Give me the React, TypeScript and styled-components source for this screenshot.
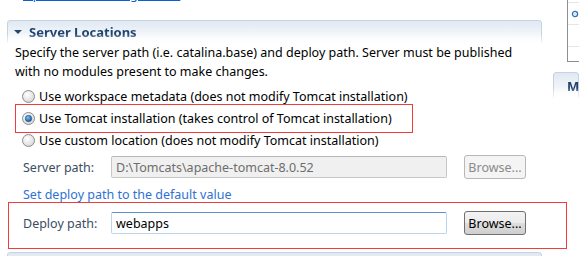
import React from "react";
import styled, { createGlobalStyle } from "styled-components";

const GlobalStyle = createGlobalStyle`
  html, body {
    margin: 0;
    padding: 0;
    background: #ffffff;
    overflow: hidden;
  }
  body {
    font-family: "Noto Sans", "Liberation Sans", sans-serif;
    font-size: 12.5px;
    color: #000;
  }
`;

const Page = styled.div`
  width: 579px;
  height: 256px;
  display: flex;
  overflow: hidden;
`;

const LeftColumn = styled.div`
  width: 535px;
  margin-left: 7px;
  display: flex;
  flex-direction: column;
`;

const RightColumn = styled.div`
  flex: 1;
  margin-left: 11px;
  display: flex;
  flex-direction: column;
  min-width: 0;
`;

const TopLink = styled.a`
  display: block;
  margin: -13px 0 0 16px;
  height: 16px;
  line-height: 16px;
  color: #0a5fd1;
  text-decoration: underline;
  white-space: nowrap;
`;

const Section = styled.section<{ $top: number }>`
  margin-top: ${(p) => p.$top}px;
  display: flex;
  flex-direction: column;
`;

const SectionHeader = styled.div<{ $height: number }>`
  height: ${(p) => p.$height}px;
  display: flex;
  align-items: center;
  gap: 7px;
  padding-left: 6px;
  border: 1px solid #c6d3e2;
  border-bottom: none;
  border-radius: 3px 3px 0 0;
  background: linear-gradient(#e0e8f2, #ffffff);
  box-sizing: border-box;
  -webkit-mask-image: linear-gradient(#000 60%, rgba(0, 0, 0, 0.2));
`;

const SectionTitle = styled.span`
  font-weight: bold;
  font-size: 13px;
  color: #1f4370;
  white-space: nowrap;
`;

const SectionBody = styled.div`
  padding-left: 8px;
  display: flex;
  flex-direction: column;
`;

const Description = styled.p`
  margin: 0;
  line-height: 19px;
  width: 505px;
`;

const RadioGroup = styled.div`
  margin: 4px 0 0 7px;
  display: flex;
  flex-direction: column;
`;

const RadioRow = styled.label<{ $highlight?: boolean }>`
  position: relative;
  height: 22px;
  display: flex;
  align-items: center;
  gap: 4px;
  white-space: nowrap;

  &::after {
    content: "";
    display: ${(p) => (p.$highlight ? "block" : "none")};
    position: absolute;
    left: -7px;
    top: -3px;
    width: 398px;
    height: 29px;
    border: 1px solid #f23b3b;
    box-sizing: border-box;
    pointer-events: none;
  }
`;

const FieldRow = styled.div<{ $top: number; $highlight?: boolean }>`
  position: relative;
  margin: ${(p) => p.$top}px 0 0 8px;
  display: flex;
  align-items: center;

  &::after {
    content: "";
    display: ${(p) => (p.$highlight ? "block" : "none")};
    position: absolute;
    left: -15px;
    top: -9px;
    width: 559px;
    height: 47px;
    border: 1px solid #f23b3b;
    box-sizing: border-box;
    pointer-events: none;
  }
`;

const FieldLabel = styled.span`
  width: 88px;
  color: #3c4d63;
`;

const TextInput = styled.div<{ $disabled?: boolean }>`
  width: 336px;
  height: 22px;
  box-sizing: border-box;
  padding-left: 4px;
  display: flex;
  align-items: center;
  color: ${(p) => (p.$disabled ? "#6d6d6d" : "#000")};
  background: ${(p) => (p.$disabled ? "#f0f0f0" : "#fff")};
  border: 1px solid ${(p) => (p.$disabled ? "#c8c8c8" : "#bcd6ec")};
  border-top-color: ${(p) => (p.$disabled ? "#b8b8b8" : "#5b93c8")};
  border-radius: 2px;
`;

const Button = styled.div<{ $disabled?: boolean }>`
  margin-left: 17px;
  width: 62px;
  height: 24px;
  box-sizing: border-box;
  display: flex;
  align-items: center;
  justify-content: center;
  border-radius: 3px;
  color: ${(p) => (p.$disabled ? "#8a8a8a" : "#000")};
  border: 1px solid ${(p) => (p.$disabled ? "#b6b9bc" : "#707070")};
  background: ${(p) =>
    p.$disabled
      ? "#f4f4f4"
      : "linear-gradient(#f3f3f3 0%, #ebebeb 50%, #dddddd 51%, #cfcfcf 100%)"};
`;

const DefaultLink = styled.a`
  margin: 7px 0 0 8px;
  line-height: 18px;
  color: #2f72d2;
`;

const PortsBox = styled.div`
  margin: -20px 0 0 14px;
  height: 82px;
  border: 1px solid #8c9096;
  border-right: none;
  box-sizing: border-box;
  display: flex;
  flex-direction: column;
`;

const PortsRow = styled.div`
  height: 21px;
  flex-shrink: 0;
  border-bottom: 1px solid #e6e6e6;
  display: flex;
  align-items: center;
  padding-left: 3px;
`;

const Triangle = ({ open }: { open: boolean }) => (
  <svg width="8" height="8" viewBox="0 0 8 8">
    {open ? (
      <path d="M0 2 L8 2 L4 6 Z" fill="#26466f" />
    ) : (
      <path d="M2 0 L6 4 L2 8 Z" fill="#26466f" />
    )}
  </svg>
);

const Radio = ({ checked }: { checked?: boolean }) => (
  <svg width="13" height="13" viewBox="0 0 13 13">
    <defs>
      <radialGradient id="rbg" cx="40%" cy="35%" r="70%">
        <stop offset="0%" stopColor="#ffffff" />
        <stop offset="100%" stopColor="#d6d6d6" />
      </radialGradient>
      <radialGradient id="rdot" cx="40%" cy="35%" r="70%">
        <stop offset="0%" stopColor="#7fc4f5" />
        <stop offset="100%" stopColor="#0d4f95" />
      </radialGradient>
    </defs>
    <circle cx="6.5" cy="6.5" r="6" fill="url(#rbg)" stroke="#8c8c8c" />
    {checked && <circle cx="6.5" cy="6.5" r="3.2" fill="url(#rdot)" stroke="#1c4f88" strokeWidth="0.6" />}
  </svg>
);

const PortIcon = () => (
  <svg width="10" height="10" viewBox="0 0 10 10">
    <circle cx="5" cy="5" r="3.2" fill="none" stroke="#2f6fb5" strokeWidth="1.6" />
    <circle cx="5" cy="5" r="1" fill="#9cc4ea" />
  </svg>
);

export default function App() {
  return (
    <>
      <GlobalStyle />
      <Page>
        <LeftColumn>
          <TopLink>Open launch configuration</TopLink>
          <Section $top={17}>
            <SectionHeader $height={23}>
              <Triangle open />
              <SectionTitle>Server Locations</SectionTitle>
            </SectionHeader>
            <SectionBody>
              <Description>
                Specify the server path (i.e. catalina.base) and deploy path. Server must be published
                with no modules present to make changes.
              </Description>
              <RadioGroup>
                <RadioRow>
                  <Radio />
                  Use workspace metadata (does not modify Tomcat installation)
                </RadioRow>
                <RadioRow $highlight>
                  <Radio checked />
                  Use Tomcat installation (takes control of Tomcat installation)
                </RadioRow>
                <RadioRow>
                  <Radio />
                  Use custom location (does not modify Tomcat installation)
                </RadioRow>
              </RadioGroup>
              <FieldRow $top={4}>
                <FieldLabel>Server path:</FieldLabel>
                <TextInput $disabled>D:\Tomcats\apache-tomcat-8.0.52</TextInput>
                <Button $disabled>Browse...</Button>
              </FieldRow>
              <DefaultLink>Set deploy path to the default value</DefaultLink>
              <FieldRow $top={7} $highlight>
                <FieldLabel>Deploy path:</FieldLabel>
                <TextInput>webapps</TextInput>
                <Button>Browse...</Button>
              </FieldRow>
            </SectionBody>
          </Section>
          <Section $top={17}>
            <SectionHeader $height={26} />
          </Section>
        </LeftColumn>
        <RightColumn>
          <PortsBox>
            <PortsRow>
              <PortIcon />
            </PortsRow>
            <PortsRow>
              <PortIcon />
            </PortsRow>
            <PortsRow />
          </PortsBox>
          <Section $top={10}>
            <SectionHeader $height={26}>
              <Triangle open={false} />
              <SectionTitle>MIME Mappings</SectionTitle>
            </SectionHeader>
          </Section>
        </RightColumn>
      </Page>
    </>
  );
}
